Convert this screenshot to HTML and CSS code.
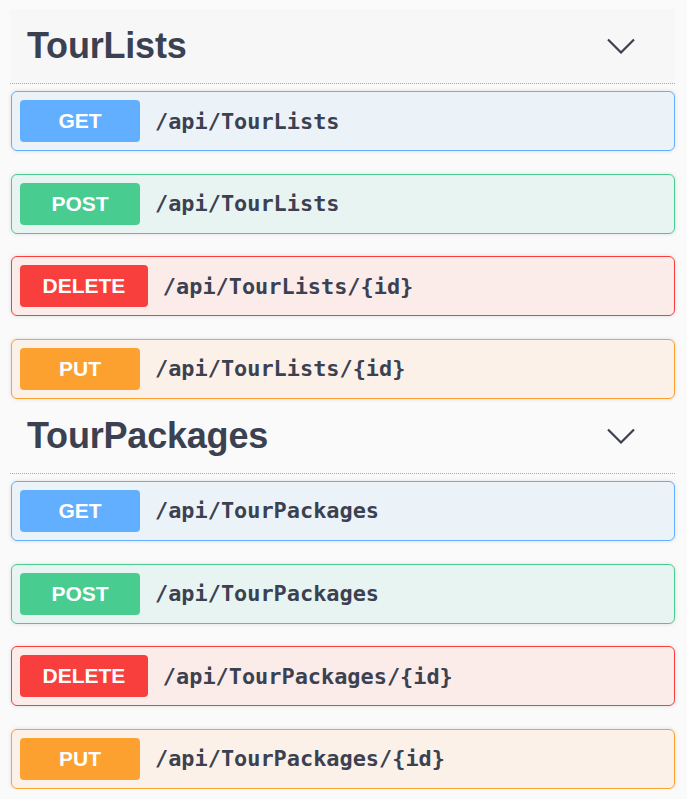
FILE: index.html
```html
<!DOCTYPE html>
<html lang="en">
<head>
<meta charset="utf-8">
<title>TourLists API</title>
<link rel="stylesheet" href="styles.css">
</head>
<body>
<div class="wrapper">
  <section class="tag-section">
    <div class="tag-header hovered">
      <h3 class="tag-title">TourLists</h3>
      <svg class="chevron" width="28" height="16" viewBox="0 0 28 16"><path d="M1 1.5 L14 14.5 L27 1.5" fill="none" stroke="#3b4151" stroke-width="2.2"/></svg>
    </div>
    <div class="op-list">
      <div class="op op-get"><span class="method">GET</span><span class="path">/api/TourLists</span></div>
      <div class="op op-post"><span class="method">POST</span><span class="path">/api/TourLists</span></div>
      <div class="op op-delete"><span class="method">DELETE</span><span class="path">/api/TourLists/{id}</span></div>
      <div class="op op-put"><span class="method">PUT</span><span class="path">/api/TourLists/{id}</span></div>
    </div>
  </section>
  <section class="tag-section">
    <div class="tag-header">
      <h3 class="tag-title">TourPackages</h3>
      <svg class="chevron" width="28" height="16" viewBox="0 0 28 16"><path d="M1 1.5 L14 14.5 L27 1.5" fill="none" stroke="#3b4151" stroke-width="2.2"/></svg>
    </div>
    <div class="op-list">
      <div class="op op-get"><span class="method">GET</span><span class="path">/api/TourPackages</span></div>
      <div class="op op-post"><span class="method">POST</span><span class="path">/api/TourPackages</span></div>
      <div class="op op-delete"><span class="method">DELETE</span><span class="path">/api/TourPackages/{id}</span></div>
      <div class="op op-put"><span class="method">PUT</span><span class="path">/api/TourPackages/{id}</span></div>
    </div>
  </section>
</div>
</body>
</html>
```
FILE: styles.css
```css
html, body {
  margin: 0;
  padding: 0;
  background: #fafafa;
}
body {
  font-family: "Liberation Sans", Arial, sans-serif;
  color: #3b4151;
}
.wrapper {
  padding: 9px 0 0 10px;
  width: 665px;
}
.tag-header {
  height: 74px;
  box-sizing: content-box;
  border-bottom: 1px dotted #8dbaa2;
  display: flex;
  align-items: center;
  justify-content: space-between;
  padding: 0 40px 0 17px;
}
.tag-header.hovered {
  background: rgba(0, 0, 0, 0.013);
}
.tag-title {
  margin: 0;
  font-size: 36px;
  font-weight: bold;
  color: #3b4151;
  letter-spacing: -0.2px;
}
.chevron {
  display: block;
}
.op-list {
  display: flex;
  flex-direction: column;
  gap: 22.667px;
  margin: 7px 0 0 1px;
  width: 664px;
}
.op {
  height: 60px;
  box-sizing: border-box;
  border: 1px solid;
  border-radius: 6px;
  box-shadow: 0 0 4px rgba(0, 0, 0, 0.12);
  display: flex;
  align-items: center;
  padding: 0 8px;
}
.method {
  box-sizing: border-box;
  min-width: 120px;
  height: 42px;
  padding: 0 22.5px;
  border-radius: 4px;
  color: #fff;
  font-size: 21px;
  font-weight: bold;
  display: flex;
  align-items: center;
  justify-content: center;
}
.path {
  font-family: "DejaVu Sans Mono", "Liberation Mono", monospace;
  font-weight: bold;
  font-size: 21.9px;
  color: #3b4151;
  padding-left: 15px;
}
.op-get { border-color: #61affe; background: #ebf3f9; }
.op-get .method { background: #61affe; }
.op-post { border-color: #49cc90; background: #e8f4f1; }
.op-post .method { background: #49cc90; }
.op-delete { border-color: #f93e3e; background: #fbece9; }
.op-delete .method { background: #f93e3e; }
.op-put { border-color: #fca130; background: #fcf1e9; }
.op-put .method { background: #fca130; }
```
